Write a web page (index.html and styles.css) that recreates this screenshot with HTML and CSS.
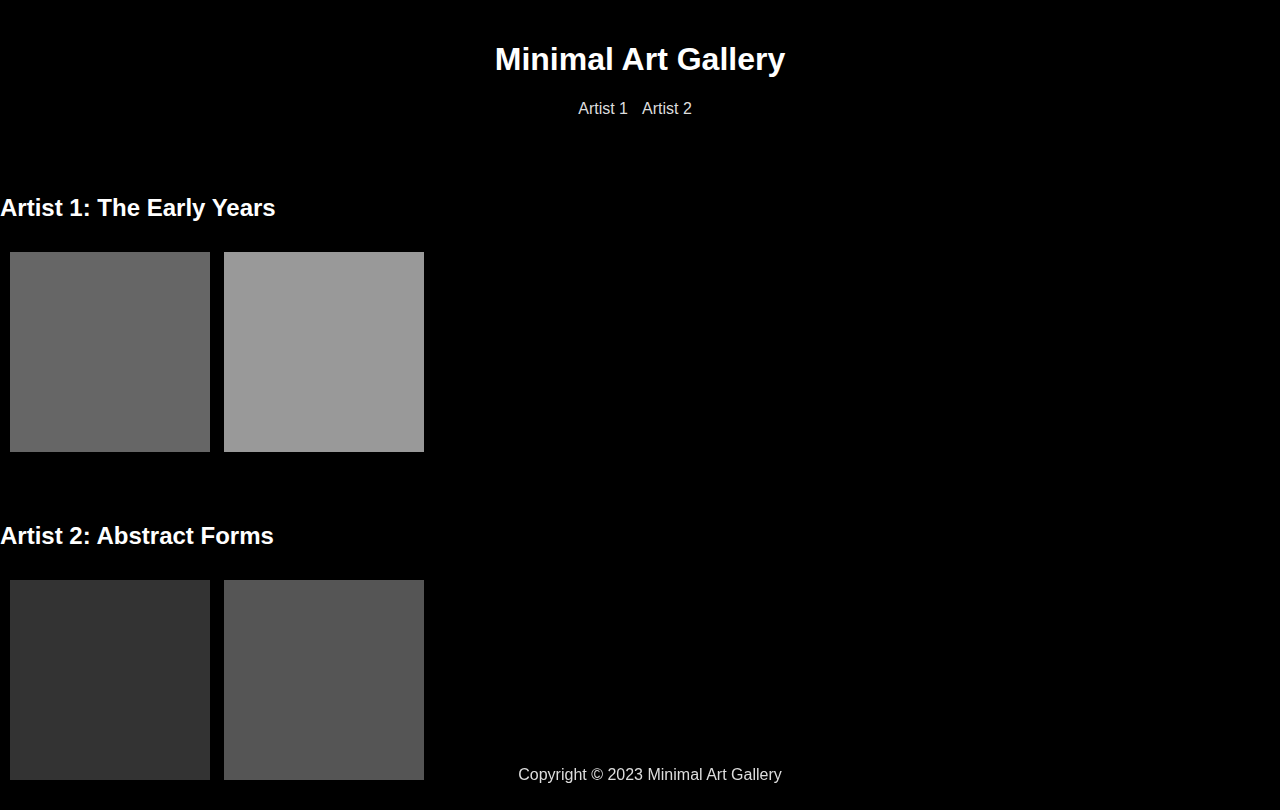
FILE: index.html
```html
<!DOCTYPE html>
<html lang="en">
<head>
<meta charset="utf-8">
<title>Minimal Art Gallery</title>
<link rel="stylesheet" href="styles.css">
</head>
<body>
<header class="site-header">
  <h1 class="site-title">Minimal Art Gallery</h1>
  <nav class="site-nav">
    <a href="#artist1" class="nav-link">Artist 1</a>
    <a href="#artist2" class="nav-link">Artist 2</a>
  </nav>
</header>
<main>
  <section id="artist1" class="artist">
    <h2 class="artist-title">Artist 1: The Early Years</h2>
    <div class="gallery">
      <div class="art art-a"></div>
      <div class="art art-b"></div>
    </div>
  </section>
  <section id="artist2" class="artist">
    <h2 class="artist-title">Artist 2: Abstract Forms</h2>
    <div class="gallery">
      <div class="art art-c"></div>
      <div class="art art-d"></div>
    </div>
  </section>
</main>
<footer class="site-footer">Copyright © 2023 Minimal Art Gallery</footer>
</body>
</html>
```

FILE: styles.css
```css
html, body {
  margin: 0;
  padding: 0;
  background: #000;
}
body {
  font-family: "Liberation Sans", Arial, sans-serif;
  color: #fff;
  font-size: 16px;
  line-height: normal;
}
.site-header {
  text-align: center;
  padding: 41px 0 20px;
}
.site-title {
  margin: 0;
  font-size: 32px;
  font-weight: bold;
  color: #fff;
  line-height: 37px;
}
.site-nav {
  margin-top: 22px;
  padding-right: 10px;
  display: flex;
  justify-content: center;
  gap: 14px;
  line-height: 18px;
}
.nav-link {
  color: #ddd;
  text-decoration: none;
}
.artist-title {
  margin: 0;
  font-size: 24px;
  font-weight: bold;
  line-height: 28px;
  color: #fff;
}
#artist1 {
  padding-top: 56px;
}
#artist2 {
  padding-top: 60px;
}
.gallery {
  display: flex;
  gap: 14px;
  padding: 30px 10px 10px;
}
.art {
  width: 200px;
  height: 200px;
}
.art-a { background: #666; }
.art-b { background: #999; }
.art-c { background: #333; }
.art-d { background: #555; }
.site-footer {
  position: fixed;
  left: 0;
  right: 0;
  bottom: 0;
  text-align: center;
  color: #ddd;
  line-height: 18px;
  padding: 10px 0 26px 20px;
}
```
